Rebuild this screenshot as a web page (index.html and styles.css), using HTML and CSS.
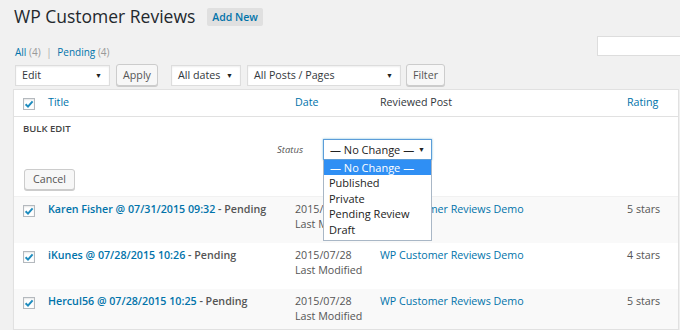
FILE: index.html
```html
<!DOCTYPE html>
<html>
<head>
<meta charset="utf-8">
<link rel="stylesheet" href="styles.css">
</head>
<body>
<div class="wrap">
  <div class="page-head">
    <h1 class="page-title">WP Customer Reviews</h1>
    <a class="add-new">Add New</a>
  </div>
  <div class="subbar">
    <div class="subsubsub">
      <a class="link">All</a> <span class="count">(4)</span>
      <span class="sep">|</span>
      <a class="link">Pending</a> <span class="count">(4)</span>
    </div>
    <div class="search-box"></div>
  </div>
  <div class="tablenav">
    <div class="select sel-edit"><span>Edit</span><span class="arrow">▼</span></div>
    <div class="button apply">Apply</div>
    <div class="select sel-dates"><span>All dates</span><span class="arrow">▼</span></div>
    <div class="select sel-posts"><span>All Posts / Pages</span><span class="arrow">▼</span></div>
    <div class="button filter">Filter</div>
  </div>
  <div class="table">
    <div class="row row-head">
      <div class="cell cb"><span class="checkbox"><svg viewBox="0 0 12 12" width="12" height="12"><path d="M2.6 6.2 L5 8.6 L9.6 3.4" fill="none" stroke="#1e8cbe" stroke-width="2"/></svg></span></div>
      <div class="cell"><a class="link">Title</a></div>
      <div class="cell"><a class="link">Date</a></div>
      <div class="cell dark">Reviewed Post</div>
      <div class="cell"><a class="link">Rating</a></div>
    </div>
    <div class="bulk">
      <div class="bulk-title">BULK EDIT</div>
      <div class="status-line">
        <span class="status-label">Status</span>
        <div class="status-wrap">
          <div class="select status-select"><span>— No Change —</span><span class="arrow">▼</span></div>
          <ul class="dropdown">
            <li class="selected">— No Change —</li>
            <li>Published</li>
            <li>Private</li>
            <li>Pending Review</li>
            <li>Draft</li>
          </ul>
        </div>
      </div>
      <div class="button cancel">Cancel</div>
    </div>
    <div class="row alt">
      <div class="cell cb"><span class="checkbox"><svg viewBox="0 0 12 12" width="12" height="12"><path d="M2.6 6.2 L5 8.6 L9.6 3.4" fill="none" stroke="#1e8cbe" stroke-width="2"/></svg></span></div>
      <div class="cell"><strong><a class="link">Karen Fisher @ 07/31/2015 09:32</a> - Pending</strong></div>
      <div class="cell muted">2015/07/31<br>Last Modified</div>
      <div class="cell"><a class="link">WP Customer Reviews Demo</a></div>
      <div class="cell muted">5 stars</div>
    </div>
    <div class="row">
      <div class="cell cb"><span class="checkbox"><svg viewBox="0 0 12 12" width="12" height="12"><path d="M2.6 6.2 L5 8.6 L9.6 3.4" fill="none" stroke="#1e8cbe" stroke-width="2"/></svg></span></div>
      <div class="cell"><strong><a class="link">iKunes @ 07/28/2015 10:26</a> - Pending</strong></div>
      <div class="cell muted">2015/07/28<br>Last Modified</div>
      <div class="cell"><a class="link">WP Customer Reviews Demo</a></div>
      <div class="cell muted">4 stars</div>
    </div>
    <div class="row alt last">
      <div class="cell cb"><span class="checkbox"><svg viewBox="0 0 12 12" width="12" height="12"><path d="M2.6 6.2 L5 8.6 L9.6 3.4" fill="none" stroke="#1e8cbe" stroke-width="2"/></svg></span></div>
      <div class="cell"><strong><a class="link">Hercul56 @ 07/28/2015 10:25</a> - Pending</strong></div>
      <div class="cell muted">2015/07/28<br>Last Modified</div>
      <div class="cell"><a class="link">WP Customer Reviews Demo</a></div>
      <div class="cell muted">5 stars</div>
    </div>
  </div>
</div>
</body>
</html>
```
FILE: styles.css
```css
html, body {
  margin: 0;
  padding: 0;
  background: #f1f1f1;
  font-family: "Open Sans", "Liberation Sans", sans-serif;
  font-size: 10.7px;
  color: #444;
  width: 680px;
  height: 330px;
  overflow: hidden;
}
.wrap {
  padding: 6px 0 0 13px;
}
.page-head {
  display: flex;
  align-items: center;
  height: 21px;
  padding-left: 1px;
}
.page-title {
  margin: 0;
  font-weight: 400;
  font-size: 17.5px;
  line-height: 21px;
  color: #23282d;
}
.add-new {
  margin-left: 12px;
  background: #e0e0e0;
  color: #0073aa;
  font-weight: 600;
  font-size: 10.5px;
  height: 18px;
  line-height: 18px;
  padding: 0 5px;
  border-radius: 2px;
}
.subbar {
  display: flex;
  justify-content: space-between;
  align-items: flex-start;
  margin-top: 9px;
  height: 28px;
}
.subsubsub {
  margin-top: 9px;
  font-size: 10px;
  padding-left: 2px;
  line-height: 14px;
}
.link { color: #0073aa; text-decoration: none; }
.count { color: #999; }
.sep { color: #aaa; margin: 0 3px; }
.search-box {
  width: 83px;
  height: 20px;
  background: #fff;
  border: 1px solid #ddd;
  border-right: none;
  box-sizing: border-box;
}
.tablenav {
  display: flex;
  align-items: center;
  gap: 6px;
  padding-left: 2px;
  height: 22px;
}
.select {
  display: flex;
  align-items: center;
  justify-content: space-between;
  box-sizing: border-box;
  height: 21px;
  background: #fff;
  border: 1px solid #ddd;
  box-shadow: inset 0 1px 2px rgba(0,0,0,0.07);
  padding: 0 7px 0 6px;
  color: #32373c;
  font-size: 10.7px;
  white-space: nowrap;
}
.arrow { font-size: 7px; color: #222; }
.sel-edit { width: 95px; }
.sel-dates { width: 70px; margin-left: 7px; }
.sel-posts { width: 154px; }
.button {
  box-sizing: border-box;
  height: 22px;
  line-height: 20px;
  padding: 0 8px;
  background: #f7f7f7;
  border: 1px solid #ccc;
  border-radius: 3px;
  box-shadow: 0 1px 0 #ccc;
  color: #555;
  font-size: 10.7px;
}
.apply { width: 42px; padding: 0; text-align: center; }
.filter { width: 39px; padding: 0; text-align: center; margin-left: -1px; }
.table {
  margin-top: 3px;
  background: #fff;
  border: 1px solid #e1e1e1;
  box-shadow: 0 1px 1px rgba(0,0,0,0.04);
  width: 666px;
  box-sizing: border-box;
}
.row {
  display: grid;
  grid-template-columns: 34px 247px 85px 247px 1fr;
  height: 46px;
  box-sizing: border-box;
  padding-top: 5px;
  line-height: 15px;
  white-space: nowrap;
}
.row.alt { background: #f9f9f9; }
.row.last { height: 40px; }
.row-head {
  height: 27px;
  padding-top: 5px;
  border-bottom: 1px solid #e1e1e1;
}
.row-head .cb { padding-top: 1px; }
.cell.cb { padding-left: 9px; padding-top: 3px; }
.dark { color: #32373c; }
.muted { color: #555; }
.row strong { font-weight: 600; color: #555; }
.checkbox {
  display: block;
  width: 12px;
  height: 12px;
  border: 1px solid #b4b9be;
  background: #fff;
  box-sizing: border-box;
  box-shadow: inset 0 1px 2px rgba(0,0,0,0.1);
}
.checkbox svg { display: block; margin: -1px 0 0 -1px; }
.bulk {
  height: 80px;
  box-sizing: border-box;
  padding: 5px 0 0 9px;
  border-bottom: 1px solid #f1f1f1;
}
.bulk-title {
  font-size: 9.5px;
  font-weight: 600;
  color: #444;
  line-height: 14px;
}
.status-line {
  display: flex;
  align-items: center;
  margin-top: 3px;
  padding-left: 254px;
  height: 21px;
}
.status-label {
  font-size: 9.5px;
  font-style: italic;
  color: #555;
  width: 46px;
}
.status-wrap { position: relative; }
.status-select {
  width: 109px;
  border-color: #5b9dd9;
  box-shadow: 0 0 2px rgba(30,140,190,0.6);
  padding-left: 6px;
  padding-right: 6px;
  color: #222;
  font-size: 11px;
}
.dropdown {
  position: absolute;
  left: 0;
  top: 21px;
  width: 109px;
  box-sizing: border-box;
  margin: 0;
  padding: 0 0 3px 0;
  list-style: none;
  background: #fff;
  border: 1px solid #a9b7c6;
  border-top: none;
  z-index: 5;
  font-size: 11px;
  color: #222;
}
.dropdown li {
  height: 15.5px;
  line-height: 15.5px;
  padding-left: 5px;
}
.dropdown li.selected {
  background: #2f8ff4;
  color: #fff;
  height: 15px;
  line-height: 15px;
  padding-left: 6px;
}
.cancel {
  display: inline-block;
  margin-top: 9px;
  margin-left: 1px;
  height: 21px;
  line-height: 19px;
}
```
